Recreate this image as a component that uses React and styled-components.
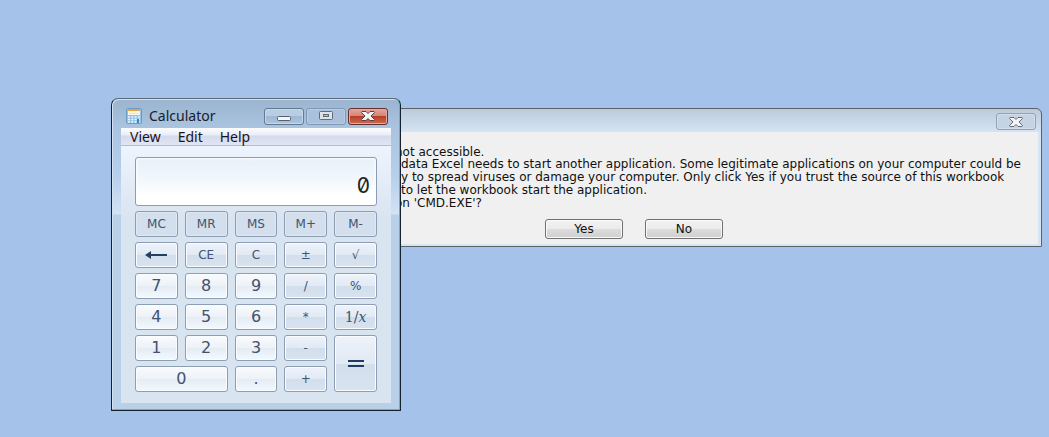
import React from "react";
import styled, { createGlobalStyle, css } from "styled-components";

const GlobalStyle = createGlobalStyle`
  * {
    box-sizing: border-box;
  }

  body {
    margin: 0;
    background-color: #a4c2ea;
  }

  button,
  input {
    font-family: inherit;
    margin: 0;
    padding: 0;
  }
`;

const Desktop = styled.main`
  position: relative;
  min-height: 100vh;
  overflow: hidden;
  background-color: #a4c2ea;
`;

// Dialog

const Dialog = styled.section`
  position: absolute;
  top: 108px;
  left: 227px;
  right: 7px;
  padding: 0 3px 2px 2px;
  border: 1px solid #5c6168;
  border-radius: 5px 6px 1px 1px;
  background: linear-gradient(#bccbdb, #d6e5f3 24px);
  font-family: "DejaVu Sans", Verdana, sans-serif;
  font-size: 12px;
  color: #101010;
`;

const DialogTitle = styled.header`
  display: flex;
  justify-content: flex-end;
  height: 23px;
  padding: 4px 2px 0 0;
`;

const DialogClose = styled.button`
  display: flex;
  align-items: center;
  justify-content: center;
  width: 40px;
  height: 17px;
  border: 1px solid #93a2b8;
  border-radius: 3px;
  background-color: #c5d3e2;
  box-shadow: inset 0 0 0 1px #d3deea;
`;

const DialogBody = styled.div`
  padding: 14px 0 5px;
  background-color: #f0f0f0;
`;

const Message = styled.div`
  padding-left: 171px;
`;

const Line = styled.p`
  margin: 0 0 0 ${({ $tucked }) => ($tucked ? "-6px" : "0")};
  line-height: 12px;
  white-space: nowrap;

  & + & {
    padding-bottom: 1px;
  }
`;

const DialogActions = styled.div`
  display: flex;
  justify-content: center;
  gap: 22px;
  margin-top: 9px;
`;

const DialogButton = styled.button`
  width: 78px;
  height: 20px;
  border: 1px solid #707070;
  border-radius: 3px;
  background: linear-gradient(#f2f2f2 0%, #ebebeb 50%, #dddddd 50%, #cfcfcf 100%);
  box-shadow: inset 0 0 0 1px #fafafa;
  font-size: 12px;
  line-height: 18px;
  color: #101010;
`;

// Calculator

const Calculator = styled.section`
  position: absolute;
  top: 98px;
  left: 111px;
  width: 290px;
  padding: 0 9px 7px;
  border: 1px solid #14222e;
  border-top-color: #5b6876;
  border-radius: 7px 7px 1px 1px;
  background: linear-gradient(#9ab4d1 0, #aac3df 28px, #b6cfea 76px, #d3e2f5 115px, #b9d0e9 116px);
  box-shadow: inset -1px -1px 0 #38c4d8, inset 1px 1px 0 #d3e2f2;
  font-family: "Noto Sans", "Open Sans", sans-serif;
`;

const TitleBar = styled.header`
  display: flex;
  align-items: center;
  height: 29px;
  padding: 5px 3px 0 5px;
`;

const Title = styled.h1`
  flex: 1;
  margin: 0 0 0 7px;
  font-size: 14px;
  font-weight: 400;
  line-height: 18px;
  color: #16202c;
`;

const WindowButtons = styled.div`
  display: flex;
  gap: 2px;
`;

const WindowButton = styled.button`
  display: flex;
  align-items: center;
  justify-content: center;
  width: 40px;
  height: 17px;
  border: 1px solid #65798f;
  border-radius: 3px;
  background: linear-gradient(#b9cde3 50%, #9fb9d5 50%, #abc5e0);
  box-shadow: inset 0 0 0 1px #c6d8eb;

  ${({ $kind }) =>
    $kind === "disabled" &&
    css`
      border-color: #8399b3;
      background: #a9c1dd;
      box-shadow: inset 0 0 0 1px #b8cde4;
    `}

  ${({ $kind }) =>
    $kind === "close" &&
    css`
      border-color: #632f32;
      background: linear-gradient(#e2a49b 0%, #d48374 50%, #b93e27 50%, #cc6c50 100%);
      box-shadow: inset 0 0 0 1px #e3aaa0;
    `}
`;

const Client = styled.div`
  background: linear-gradient(#edf4fd 18px, #d9e4f1 92px);
`;

const MenuBar = styled.nav`
  display: flex;
  gap: 17px;
  height: 18px;
  padding-left: 9px;
  border-bottom: 1px solid #b4bccc;
  background: linear-gradient(#fcfdff 0, #e9edf7 7px, #d5daec 8px, #e1e6f4 17px);
`;

const MenuItem = styled.button`
  border: none;
  background: none;
  font-size: 14px;
  line-height: 17px;
  color: #1c1220;
`;

const Panel = styled.div`
  display: flex;
  flex-direction: column;
  gap: 5px;
  padding: 11px 14px;
`;

const Display = styled.input`
  width: 100%;
  height: 49px;
  padding: 8px 6px 0 0;
  border: 1px solid #8e9cb1;
  border-radius: 3px;
  outline: none;
  background: linear-gradient(#e6effa, #f3f8fd 50%, #ffffff 80%);
  box-shadow: inset 0 0 3px 1px #ffffff;
  font-family: Inter, sans-serif;
  font-feature-settings: "zero";
  font-size: 21px;
  text-align: right;
  color: #222222;
`;

const Keys = styled.div`
  display: grid;
  grid-template-columns: repeat(5, 1fr);
  grid-auto-rows: 26px;
  gap: 5px 7px;
  font-family: "DejaVu Sans", sans-serif;
`;

const keyFaces = {
  memory: css`
    background: #d3dfec;
    box-shadow: inset 0 0 0 1px #e0e9f3;
    font-size: 12px;
  `,
  operator: css`
    background: linear-gradient(#eef3fb 0%, #e1e9f4 50%, #d2deec 50%, #d8e3ef 100%);
    font-size: 12px;
  `,
  digit: css`
    background: linear-gradient(#f8fbfe 0%, #edf2f8 50%, #e4ebf3 50%, #f2f9ff 100%);
    font-size: 16px;
  `,
};

const Key = styled.button`
  display: flex;
  align-items: center;
  justify-content: center;
  grid-column: span ${({ $cols = 1 }) => $cols};
  grid-row: span ${({ $rows = 1 }) => $rows};
  min-width: 0;
  border: 1px solid #8d9db3;
  border-radius: 3px;
  box-shadow: inset 0 0 0 1px #fafcff;
  line-height: 20px;
  color: #41536f;
  ${({ $face }) => keyFaces[$face]}
`;

const Reciprocal = styled.span`
  font-family: "DejaVu Serif", serif;
  font-size: 14px;
`;

const CloseMark = ({ outline }) => (
  <svg width="14" height="10" viewBox="0 0 14 10" aria-hidden="true">
    <path
      d="M1 0.5H5L7 2.5L9 0.5H13L13.5 1.5L10 5L13.5 8.5L13 9.5H9L7 7.5L5 9.5H1L0.5 8.5L4 5L0.5 1.5Z"
      fill="#f4f4f4"
      stroke={outline}
      strokeLinejoin="round"
    />
  </svg>
);

const MinimizeMark = () => (
  <svg width="14" height="12" viewBox="0 0 14 12" aria-hidden="true">
    <rect x="0.5" y="6.5" width="13" height="4" rx="1" fill="#f5f5f5" stroke="#576071" />
  </svg>
);

const MaximizeMark = () => (
  <svg width="14" height="10" viewBox="0 0 14 10" aria-hidden="true">
    <rect x="0.5" y="0.5" width="13" height="8" rx="1" fill="#dfe3e8" stroke="#606b7b" />
    <rect x="4.5" y="3.5" width="5" height="2" fill="#a9c1dd" stroke="#606b7b" />
  </svg>
);

const CalculatorIcon = () => (
  <svg width="16" height="16" viewBox="0 0 16 16" aria-hidden="true">
    <rect x="0.5" y="0.5" width="15" height="15" rx="1" fill="#8fc2e4" stroke="#6a9cc3" />
    <rect x="2" y="1" width="12" height="6" fill="#fdf6e4" />
    <path d="M2 2H14" stroke="#e9a245" strokeWidth="2" />
    <path d="M3 5.5H13" stroke="#dfe9ef" />
    <path
      d="M2 9H14M2 11.5H14M2 14H14"
      stroke="#eef8ff"
      strokeWidth="1.5"
      strokeDasharray="2 1.3"
    />
    <path d="M12 11V15" stroke="#3c86bd" strokeWidth="2" />
  </svg>
);

const BackArrow = () => (
  <svg width="22" height="8" viewBox="0 0 22 8" aria-hidden="true">
    <path d="M0 4L6 0V3H22V5H6V8Z" fill="#25405f" />
  </svg>
);

const EqualsMark = () => (
  <svg width="16" height="8" viewBox="0 0 16 8" aria-hidden="true">
    <path d="M0 1H16M0 6H16" stroke="#1f3b62" strokeWidth="2" />
  </svg>
);

const keys = [
  { label: "MC", face: "memory" },
  { label: "MR", face: "memory" },
  { label: "MS", face: "memory" },
  { label: "M+", face: "memory" },
  { label: "M-", face: "memory" },
  { label: "Backspace", face: "operator", content: <BackArrow /> },
  { label: "CE", face: "operator" },
  { label: "C", face: "operator" },
  { label: "±", face: "operator" },
  { label: "√", face: "operator" },
  { label: "7", face: "digit" },
  { label: "8", face: "digit" },
  { label: "9", face: "digit" },
  { label: "/", face: "operator" },
  { label: "%", face: "operator" },
  { label: "4", face: "digit" },
  { label: "5", face: "digit" },
  { label: "6", face: "digit" },
  { label: "*", face: "operator" },
  {
    label: "1/x",
    face: "operator",
    content: (
      <Reciprocal>
        1/<i>x</i>
      </Reciprocal>
    ),
  },
  { label: "1", face: "digit" },
  { label: "2", face: "digit" },
  { label: "3", face: "digit" },
  { label: "-", face: "operator" },
  { label: "Equals", face: "operator", rows: 2, content: <EqualsMark /> },
  { label: "0", face: "digit", cols: 2 },
  { label: ".", face: "digit" },
  { label: "+", face: "operator" },
];

const App = () => {
  return (
    <Desktop>
      <GlobalStyle />

      <Dialog>
        <DialogTitle>
          <DialogClose type="button" aria-label="Close dialog">
            <CloseMark outline="#636d7b" />
          </DialogClose>
        </DialogTitle>
        <DialogBody>
          <Message>
            <Line $tucked>not accessible.</Line>
            <Line>
              data Excel needs to start another application. Some legitimate applications on your computer could be
            </Line>
            <Line>
              y to spread viruses or damage your computer. Only click Yes if you trust the source of this workbook
            </Line>
            <Line>to let the workbook start the application.</Line>
            <Line $tucked>on 'CMD.EXE'?</Line>
          </Message>
          <DialogActions>
            <DialogButton type="button">Yes</DialogButton>
            <DialogButton type="button">No</DialogButton>
          </DialogActions>
        </DialogBody>
      </Dialog>

      <Calculator>
        <TitleBar>
          <CalculatorIcon />
          <Title>Calculator</Title>
          <WindowButtons>
            <WindowButton type="button" aria-label="Minimize">
              <MinimizeMark />
            </WindowButton>
            <WindowButton type="button" aria-label="Maximize" $kind="disabled">
              <MaximizeMark />
            </WindowButton>
            <WindowButton type="button" aria-label="Close" $kind="close">
              <CloseMark outline="#59434b" />
            </WindowButton>
          </WindowButtons>
        </TitleBar>
        <Client>
          <MenuBar>
            <MenuItem type="button">View</MenuItem>
            <MenuItem type="button">Edit</MenuItem>
            <MenuItem type="button">Help</MenuItem>
          </MenuBar>
          <Panel>
            <Display type="text" aria-label="Result" value="0" readOnly />
            <Keys>
              {keys.map(({ label, face, cols, rows, content }) => (
                <Key key={label} type="button" aria-label={label} $face={face} $cols={cols} $rows={rows}>
                  {content || label}
                </Key>
              ))}
            </Keys>
          </Panel>
        </Client>
      </Calculator>
    </Desktop>
  );
};

export default App;
